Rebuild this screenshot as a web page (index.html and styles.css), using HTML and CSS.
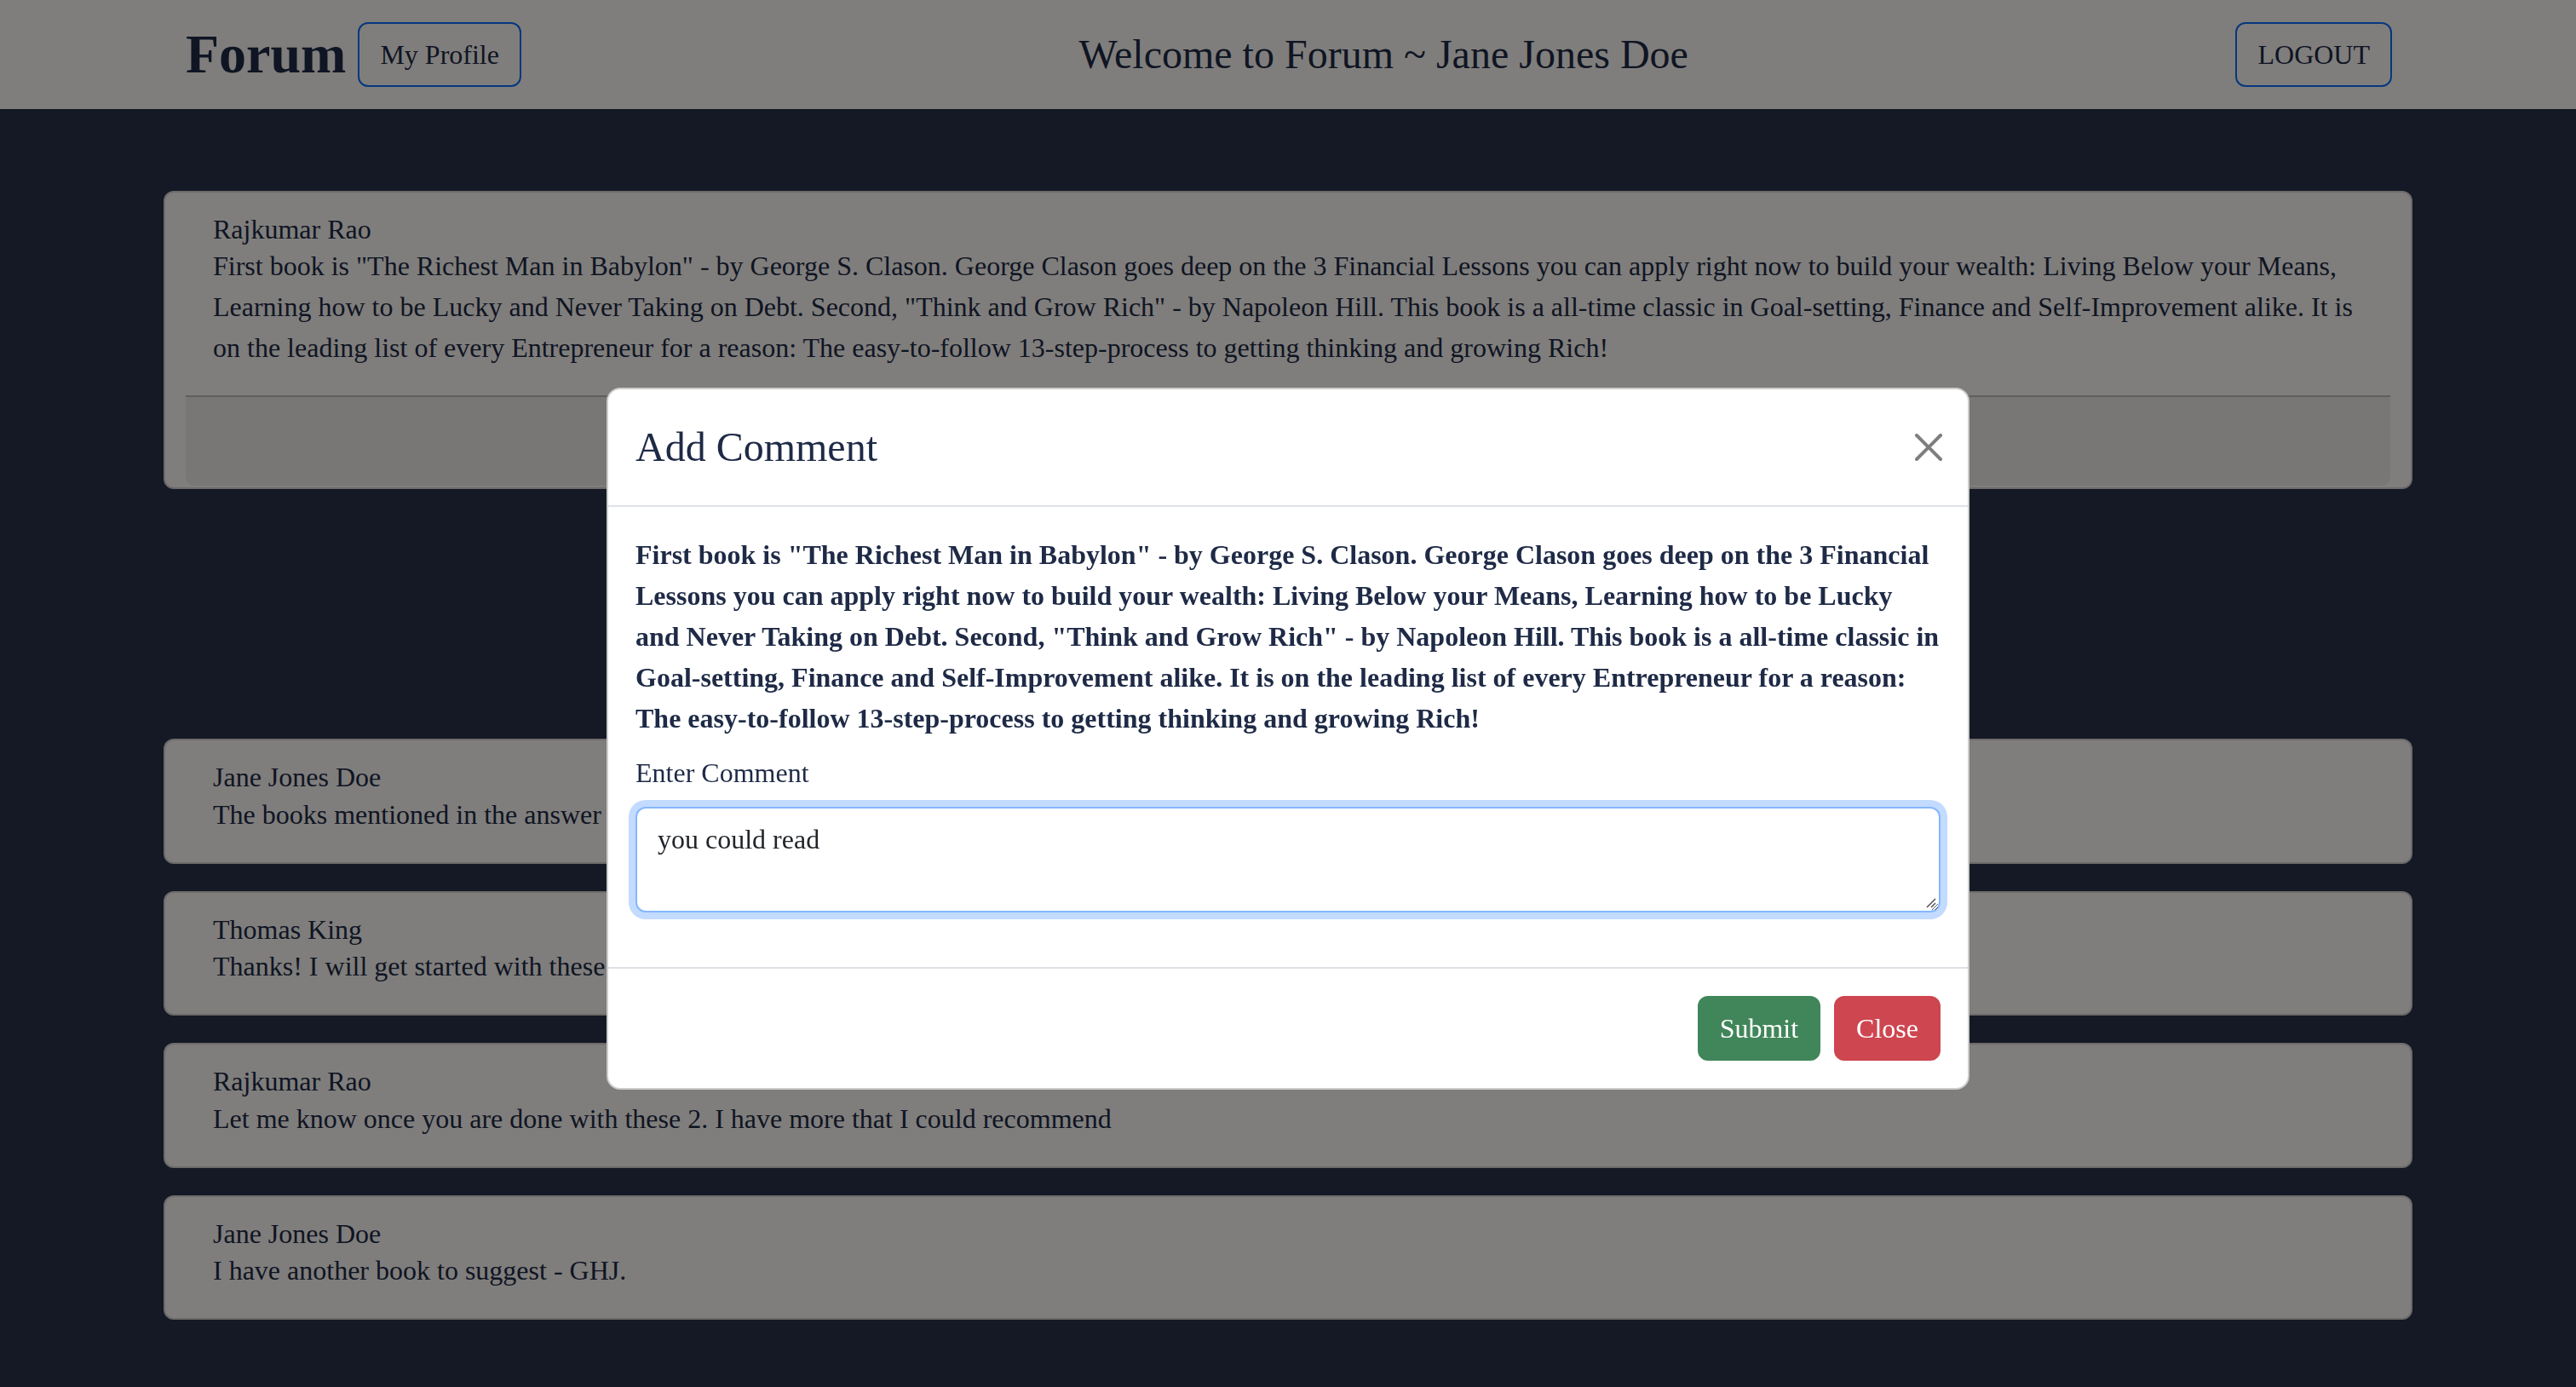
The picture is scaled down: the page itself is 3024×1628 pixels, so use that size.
FILE: index.html
```html
<!DOCTYPE html>
<html lang="en">
<head>
<meta charset="utf-8">
<title>Forum</title>
<link rel="stylesheet" href="styles.css">
</head>
<body>
<nav class="navbar">
  <div class="nav-inner">
    <div class="nav-left">
      <span class="brand">Forum</span>
      <button class="btn btn-outline">My Profile</button>
    </div>
    <div class="welcome">Welcome to Forum ~ Jane Jones Doe</div>
    <button class="btn btn-outline">LOGOUT</button>
  </div>
</nav>

<main class="container">
  <div class="card card-answer">
    <h6 class="author">Rajkumar Rao</h6>
    <p class="text">First book is "The Richest Man in Babylon" - by George S. Clason. George Clason goes deep on the 3 Financial Lessons you can apply right now to build your wealth: Living Below your Means, Learning how to be Lucky and Never Taking on Debt. Second, "Think and Grow Rich" - by Napoleon Hill. This book is a all-time classic in Goal-setting, Finance and Self-Improvement alike. It is on the leading list of every Entrepreneur for a reason: The easy-to-follow 13-step-process to getting thinking and growing Rich!</p>
    <div class="card-footer"></div>
  </div>

  <div class="comments">
    <div class="card">
      <h6 class="author">Jane Jones Doe</h6>
      <p class="text">The books mentioned in the answer are great, thank you.</p>
    </div>
    <div class="card">
      <h6 class="author">Thomas King</h6>
      <p class="text">Thanks! I will get started with these right away.</p>
    </div>
    <div class="card">
      <h6 class="author">Rajkumar Rao</h6>
      <p class="text">Let me know once you are done with these 2. I have more that I could recommend</p>
    </div>
    <div class="card">
      <h6 class="author">Jane Jones Doe</h6>
      <p class="text">I have another book to suggest - GHJ.</p>
    </div>
  </div>
</main>

<div class="backdrop"></div>

<div class="modal">
  <div class="modal-dialog">
    <div class="modal-content">
      <div class="modal-header">
        <h4 class="modal-title">Add Comment</h4>
        <button class="btn-close" aria-label="Close">
          <svg viewBox="0 0 16 16" width="32" height="32"><path d="M.293.293a1 1 0 0 1 1.414 0L8 6.586 14.293.293a1 1 0 1 1 1.414 1.414L9.414 8l6.293 6.293a1 1 0 0 1-1.414 1.414L8 9.414l-6.293 6.293a1 1 0 0 1-1.414-1.414L6.586 8 .293 1.707a1 1 0 0 1 0-1.414z"/></svg>
        </button>
      </div>
      <div class="modal-body">
        <h6 class="quote">First book is "The Richest Man in Babylon" - by George S. Clason. George Clason goes deep on the 3 Financial Lessons you can apply right now to build your wealth: Living Below your Means, Learning how to be Lucky and Never Taking on Debt. Second, "Think and Grow Rich" - by Napoleon Hill. This book is a all-time classic in Goal-setting, Finance and Self-Improvement alike. It is on the leading list of every Entrepreneur for a reason: The easy-to-follow 13-step-process to getting thinking and growing Rich!</h6>
        <label class="form-label" for="comment">Enter Comment</label>
        <div class="field">
          <textarea id="comment" class="form-control" rows="2">you could read</textarea>
          <svg class="grip" viewBox="0 0 12 12" width="12" height="12"><path d="M11 1L1 11M11 6L6 11"/></svg>
        </div>
      </div>
      <div class="modal-footer">
        <button class="btn btn-success">Submit</button>
        <button class="btn btn-danger">Close</button>
      </div>
    </div>
  </div>
</div>
</body>
</html>
```

FILE: styles.css
```css
* { box-sizing: border-box; }

html, body {
  margin: 0;
  padding: 0;
}

body {
  background: #2a324c;
  color: #1e2a46;
  font-family: "Liberation Serif", "Times New Roman", serif;
  font-size: 32px;
  line-height: 48px;
  min-height: 1628px;
}

/* ---------- navbar ---------- */
.navbar {
  background: #fefcf8;
  height: 128px;
}

.nav-inner {
  width: 2640px;
  margin: 0 auto;
  padding: 0 24px;
  height: 100%;
  display: flex;
  align-items: center;
  justify-content: space-between;
}

.nav-left {
  display: flex;
  align-items: center;
  padding-left: 2px;
}

.brand {
  font-size: 64px;
  font-weight: bold;
  line-height: 76px;
  margin-right: 14px;
  color: #1e2a46;
}

.welcome {
  font-size: 48px;
  line-height: 72px;
  color: #1e2a46;
  padding-left: 12px;
}

.btn {
  font-family: "Liberation Serif", "Times New Roman", serif;
  font-size: 32px;
  line-height: 48px;
  padding: 12px 24px;
  border: 2px solid transparent;
  border-radius: 12px;
  background: transparent;
  cursor: pointer;
}

.btn-outline {
  border-color: #0d6efd;
  color: #1e2a46;
}

/* ---------- content ---------- */
.container {
  width: 2640px;
  margin: 0 auto;
  padding-top: 96px;
}

.card {
  background: #fefcf8;
  border: 2px solid rgba(0, 0, 0, 0.15);
  border-radius: 12px;
  padding: 24px 24px 0;
  margin-bottom: 32px;
}

.card-answer {
  margin-bottom: 293px;
}

.author {
  margin: 0;
  padding: 0 32px;
  font-size: 32px;
  font-weight: normal;
  line-height: 1.2;
}

.text {
  margin: 0 0 32px;
  padding: 0 32px;
}

.card-footer {
  height: 106px;
  background: rgba(0, 0, 0, 0.055);
  border-top: 2px solid rgba(0, 0, 0, 0.2);
  border-radius: 0 0 10px 10px;
  margin-bottom: 2px;
}

/* ---------- modal ---------- */
.backdrop {
  position: fixed;
  inset: 0;
  background: rgba(0, 0, 0, 0.5);
}

.modal {
  position: fixed;
  inset: 0;
  display: flex;
  justify-content: center;
  align-items: flex-start;
}

.modal-dialog {
  width: 1600px;
  margin-top: 455px;
}

.modal-content {
  background: #fff;
  border: 2px solid rgba(0, 0, 0, 0.2);
  border-radius: 16px;
}

.modal-header {
  display: flex;
  align-items: center;
  justify-content: space-between;
  padding: 32px;
  border-bottom: 2px solid #dee2e6;
}

.modal-title {
  margin: 0;
  font-size: 48px;
  font-weight: normal;
  line-height: 72px;
}

.btn-close {
  border: 0;
  background: transparent;
  padding: 0;
  margin-right: -2px;
  width: 32px;
  height: 32px;
  display: flex;
  cursor: pointer;
}

.btn-close svg {
  fill: #000;
  opacity: 0.5;
}

.modal-body {
  padding: 32px;
}

.quote {
  margin: 0 0 16px;
  font-size: 32px;
  font-weight: bold;
  line-height: 48px;
}

.form-label {
  display: block;
  margin-bottom: 16px;
}

.field {
  position: relative;
  margin-bottom: 32px;
}

.form-control {
  display: block;
  width: 100%;
  height: 124px;
  font-family: "Liberation Serif", "Times New Roman", serif;
  font-size: 32px;
  line-height: 48px;
  color: #212529;
  padding: 12px 24px;
  border: 2px solid #86b7fe;
  border-radius: 12px;
  box-shadow: 0 0 0 8px rgba(13, 110, 253, 0.25);
  outline: none;
  background: #fff;
  resize: vertical;
}

.grip {
  position: absolute;
  right: 5px;
  bottom: 5px;
  stroke: #555;
  stroke-width: 1.5;
  fill: none;
}

.modal-footer {
  display: flex;
  justify-content: flex-end;
  align-items: center;
  padding: 24px;
  border-top: 2px solid #dee2e6;
}

.modal-footer .btn {
  margin: 8px;
  color: #fff;
}

.btn-success {
  background: #41865a;
  border-color: #41865a;
}

.btn-danger {
  background: #cd4650;
  border-color: #cd4650;
}
```
